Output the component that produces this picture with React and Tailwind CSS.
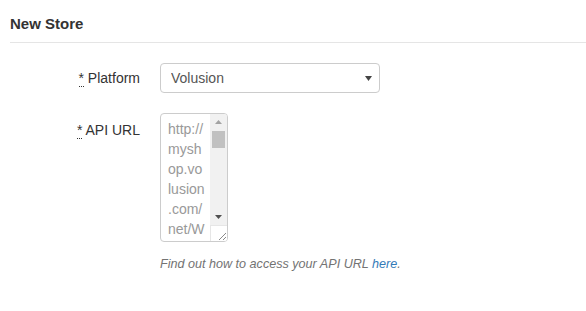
import React from 'react';

const apiUrl =
  'http://myshop.volusion.com/net/WebService.aspx?Login=you@example.com&EncryptedPassword=XXXXXXXXXXXXXXXXXXXXXXXXXXXXXXXXXXXXXXXXXXXXXXXXXXXXXXXXXXXXXXXX&EDI_Name=Generic\\Orders&SELECT_Columns=*';

const Required = () => (
  <abbr title="required" className="no-underline border-b border-dotted border-[#333] cursor-help">
    *
  </abbr>
);

// fake scrollbar drawn over the textarea's right edge
const ScrollBar = () => (
  <div className="absolute top-[1px] right-[1px] bottom-[1px] w-[17px] flex flex-col bg-[#f1f1f1] rounded-r-[3px] overflow-hidden">
    <div className="h-[16px] flex items-center justify-center">
      <svg width="7" height="4" viewBox="0 0 7 4">
        <path d="M3.5 0L7 4H0z" fill="#a3a3a3" />
      </svg>
    </div>
    <div className="flex-1 px-[2px] pt-[1px]">
      <div className="h-[17px] bg-[#c1c1c1]" />
    </div>
    <div className="h-[16px] flex items-center justify-center">
      <svg width="7" height="4" viewBox="0 0 7 4">
        <path d="M0 0H7L3.5 4z" fill="#505050" />
      </svg>
    </div>
    <div className="h-[16px] bg-white border-t border-l border-[#e6e6e6] flex items-end justify-end">
      <svg width="10" height="10" viewBox="0 0 10 10">
        <path d="M9 2L2 9M9 6L6 9" stroke="#8a8a8a" strokeWidth="1" />
      </svg>
    </div>
  </div>
);

const App = () => {
  return (
    <div className="w-[586px] h-[311px] bg-white text-[#333] font-['Liberation_Sans',Arial,sans-serif] text-[14px]">
      <div className="px-[10px] pt-[14px]">
        <h3 className="text-[15px] font-bold leading-[20px] pb-[8px] border-b border-[#e5e5e5] mr-[-10px]">
          New Store
        </h3>
      </div>

      <form className="mt-[20px] grid grid-cols-[140px_1fr] gap-x-[20px] gap-y-[20px] items-start">
        <label className="text-right leading-[20px] pt-[5px]">
          <Required /> Platform
        </label>
        <div className="relative w-[220px] h-[30px]">
          <select
            defaultValue="volusion"
            className="appearance-none w-full h-full border border-[#ccc] rounded-[4px] pl-[10px] text-[14px] text-[#555] bg-white outline-none"
          >
            <option value="volusion">Volusion</option>
            <option value="shopify">Shopify</option>
          </select>
          <svg
            className="absolute right-[8px] top-[13px] pointer-events-none"
            width="7"
            height="5"
            viewBox="0 0 7 5"
          >
            <path d="M0 0H7L3.5 5z" fill="#444" />
          </svg>
        </div>

        <label className="text-right leading-[20px] pt-[7px]">
          <Required /> API URL
        </label>
        <div>
          <div className="relative w-[68px] h-[129px]">
            <textarea
              readOnly
              defaultValue={apiUrl}
              className="block w-full h-full border border-[#ccc] rounded-[4px] pl-[7px] pr-[22px] py-[5px] leading-[20px] text-[14px] text-[#999] overflow-hidden resize-none bg-white outline-none"
            />
            <ScrollBar />
          </div>
          <p className="mt-[14px] text-[12.6px] italic text-[#737373] leading-[17px]">
            Find out how to access your API URL{' '}
            <a href="#" className="text-[#337ab7]">
              here
            </a>
            .
          </p>
        </div>
      </form>
    </div>
  );
};

export default App;
